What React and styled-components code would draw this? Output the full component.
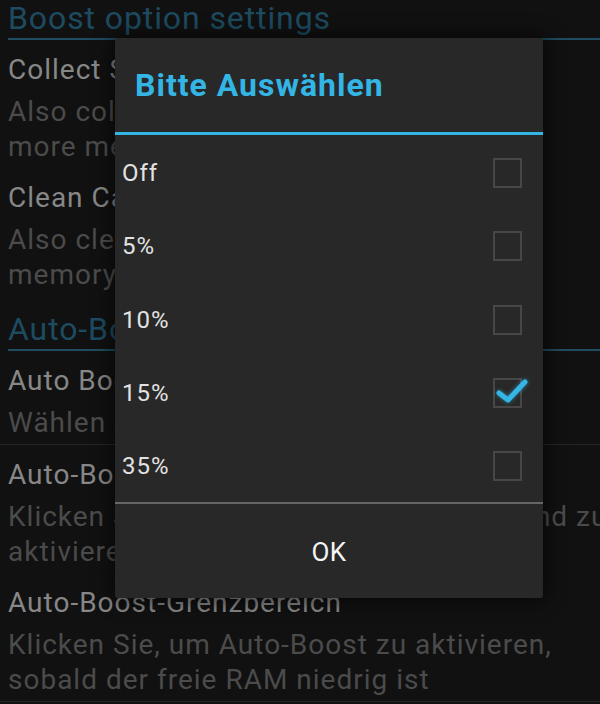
import React from 'react';
import styled, { createGlobalStyle } from 'styled-components';

const GlobalStyle = createGlobalStyle`
  html, body {
    margin: 0;
    padding: 0;
    background: #111111;
  }
  body {
    font-family: Roboto, "Noto Sans", "Liberation Sans", sans-serif;
  }
`;

const Screen = styled.div`
  position: relative;
  width: 600px;
  height: 704px;
  overflow: hidden;
  background: #111111;
`;

const Category = styled.div`
  margin: ${(p) => p.$top}px 0 0 8px;
  padding-bottom: 2px;
  border-bottom: 2px solid #1f4c60;
  color: #1d4b60;
  font-size: 32px;
  letter-spacing: 0.9px;
  line-height: 36px;
  white-space: nowrap;
`;

const Pref = styled.div`
  padding: 12px 0 4px 8px;
  border-bottom: ${(p) => (p.$divider ? '1px solid #262626' : 'none')};
`;

const PrefTitle = styled.div`
  color: #878787;
  font-size: 28px;
  letter-spacing: 1px;
  line-height: 36px;
  white-space: nowrap;
`;

const PrefSummary = styled.div`
  margin-top: 6px;
  color: #4b4b4b;
  font-size: 28px;
  letter-spacing: 1px;
  line-height: 35px;
  white-space: nowrap;
`;

const Dialog = styled.div`
  position: absolute;
  top: 38px;
  left: 115px;
  width: 428px;
  height: 560px;
  display: flex;
  flex-direction: column;
  background: #282828;
  border-radius: 3px;
  box-shadow: 0 0 18px 4px rgba(0, 0, 0, 0.55);
`;

const DialogTitle = styled.div`
  height: 94px;
  display: flex;
  align-items: center;
  padding-left: 20px;
  border-bottom: 3px solid #33b5e5;
  color: #33b5e5;
  font-size: 32px;
  font-weight: 700;
  letter-spacing: 1px;
`;

const OptionList = styled.div`
  flex: 1;
  display: flex;
  flex-direction: column;
  border-bottom: 2px solid #666666;
`;

const Option = styled.div`
  flex: 1;
  display: flex;
  align-items: center;
  justify-content: space-between;
  padding: 2px 21px 0 7px;
  color: #e2e2e2;
  font-size: 24px;
  letter-spacing: 1px;
`;

const Box = styled.div`
  position: relative;
  width: 25px;
  height: 26px;
  border: 2px solid #474747;
`;

const Tick = styled.svg`
  position: absolute;
  left: 0;
  top: -3px;
  overflow: visible;
  filter: drop-shadow(0 0 2px rgba(51, 181, 229, 0.6));
`;

const ButtonBar = styled.div`
  height: 94px;
  display: flex;
  align-items: center;
  justify-content: center;
  padding-top: 2px;
  box-sizing: border-box;
  color: #f4f4f4;
  font-size: 26px;
  letter-spacing: 0.5px;
`;

const options = [
  { label: 'Off', checked: false },
  { label: '5%', checked: false },
  { label: '10%', checked: false },
  { label: '15%', checked: true },
  { label: '35%', checked: false },
];

function CheckBox({ checked }) {
  return (
    <Box>
      {checked ? (
        <Tick width="29" height="30" viewBox="0 0 29 30">
          <path
            d="M4 16 L13 23 L30 5"
            fill="none"
            stroke="#33b5e5"
            strokeWidth="5"
            strokeLinecap="round"
            strokeLinejoin="round"
          />
        </Tick>
      ) : null}
    </Box>
  );
}

function App() {
  return (
    <>
      <GlobalStyle />
      <Screen>
        <Category $top={0}>Boost option settings</Category>
        <Pref>
          <PrefTitle>Collect System Memory</PrefTitle>
          <PrefSummary>
            Also collect system memory to release
            <br />
            more memory
          </PrefSummary>
        </Pref>
        <Pref>
          <PrefTitle>Clean Cache</PrefTitle>
          <PrefSummary>
            Also clean app cache to release more
            <br />
            memory
          </PrefSummary>
        </Pref>
        <Category $top={15}>Auto-Boost</Category>
        <Pref $divider>
          <PrefTitle>Auto Boost Intervall</PrefTitle>
          <PrefSummary>Wählen Sie das Intervall</PrefSummary>
        </Pref>
        <Pref>
          <PrefTitle>Auto-Boost beim Start</PrefTitle>
          <PrefSummary>
            Klicken Sie, um Auto-Boost zu starten und zu
            <br />
            aktivieren
          </PrefSummary>
        </Pref>
        <Pref $divider>
          <PrefTitle>Auto-Boost-Grenzbereich</PrefTitle>
          <PrefSummary>
            Klicken Sie, um Auto-Boost zu aktivieren,
            <br />
            sobald der freie RAM niedrig ist
          </PrefSummary>
        </Pref>

        <Dialog>
          <DialogTitle>Bitte Auswählen</DialogTitle>
          <OptionList>
            {options.map((o) => (
              <Option key={o.label}>
                <span>{o.label}</span>
                <CheckBox checked={o.checked} />
              </Option>
            ))}
          </OptionList>
          <ButtonBar>OK</ButtonBar>
        </Dialog>
      </Screen>
    </>
  );
}

export default App;
